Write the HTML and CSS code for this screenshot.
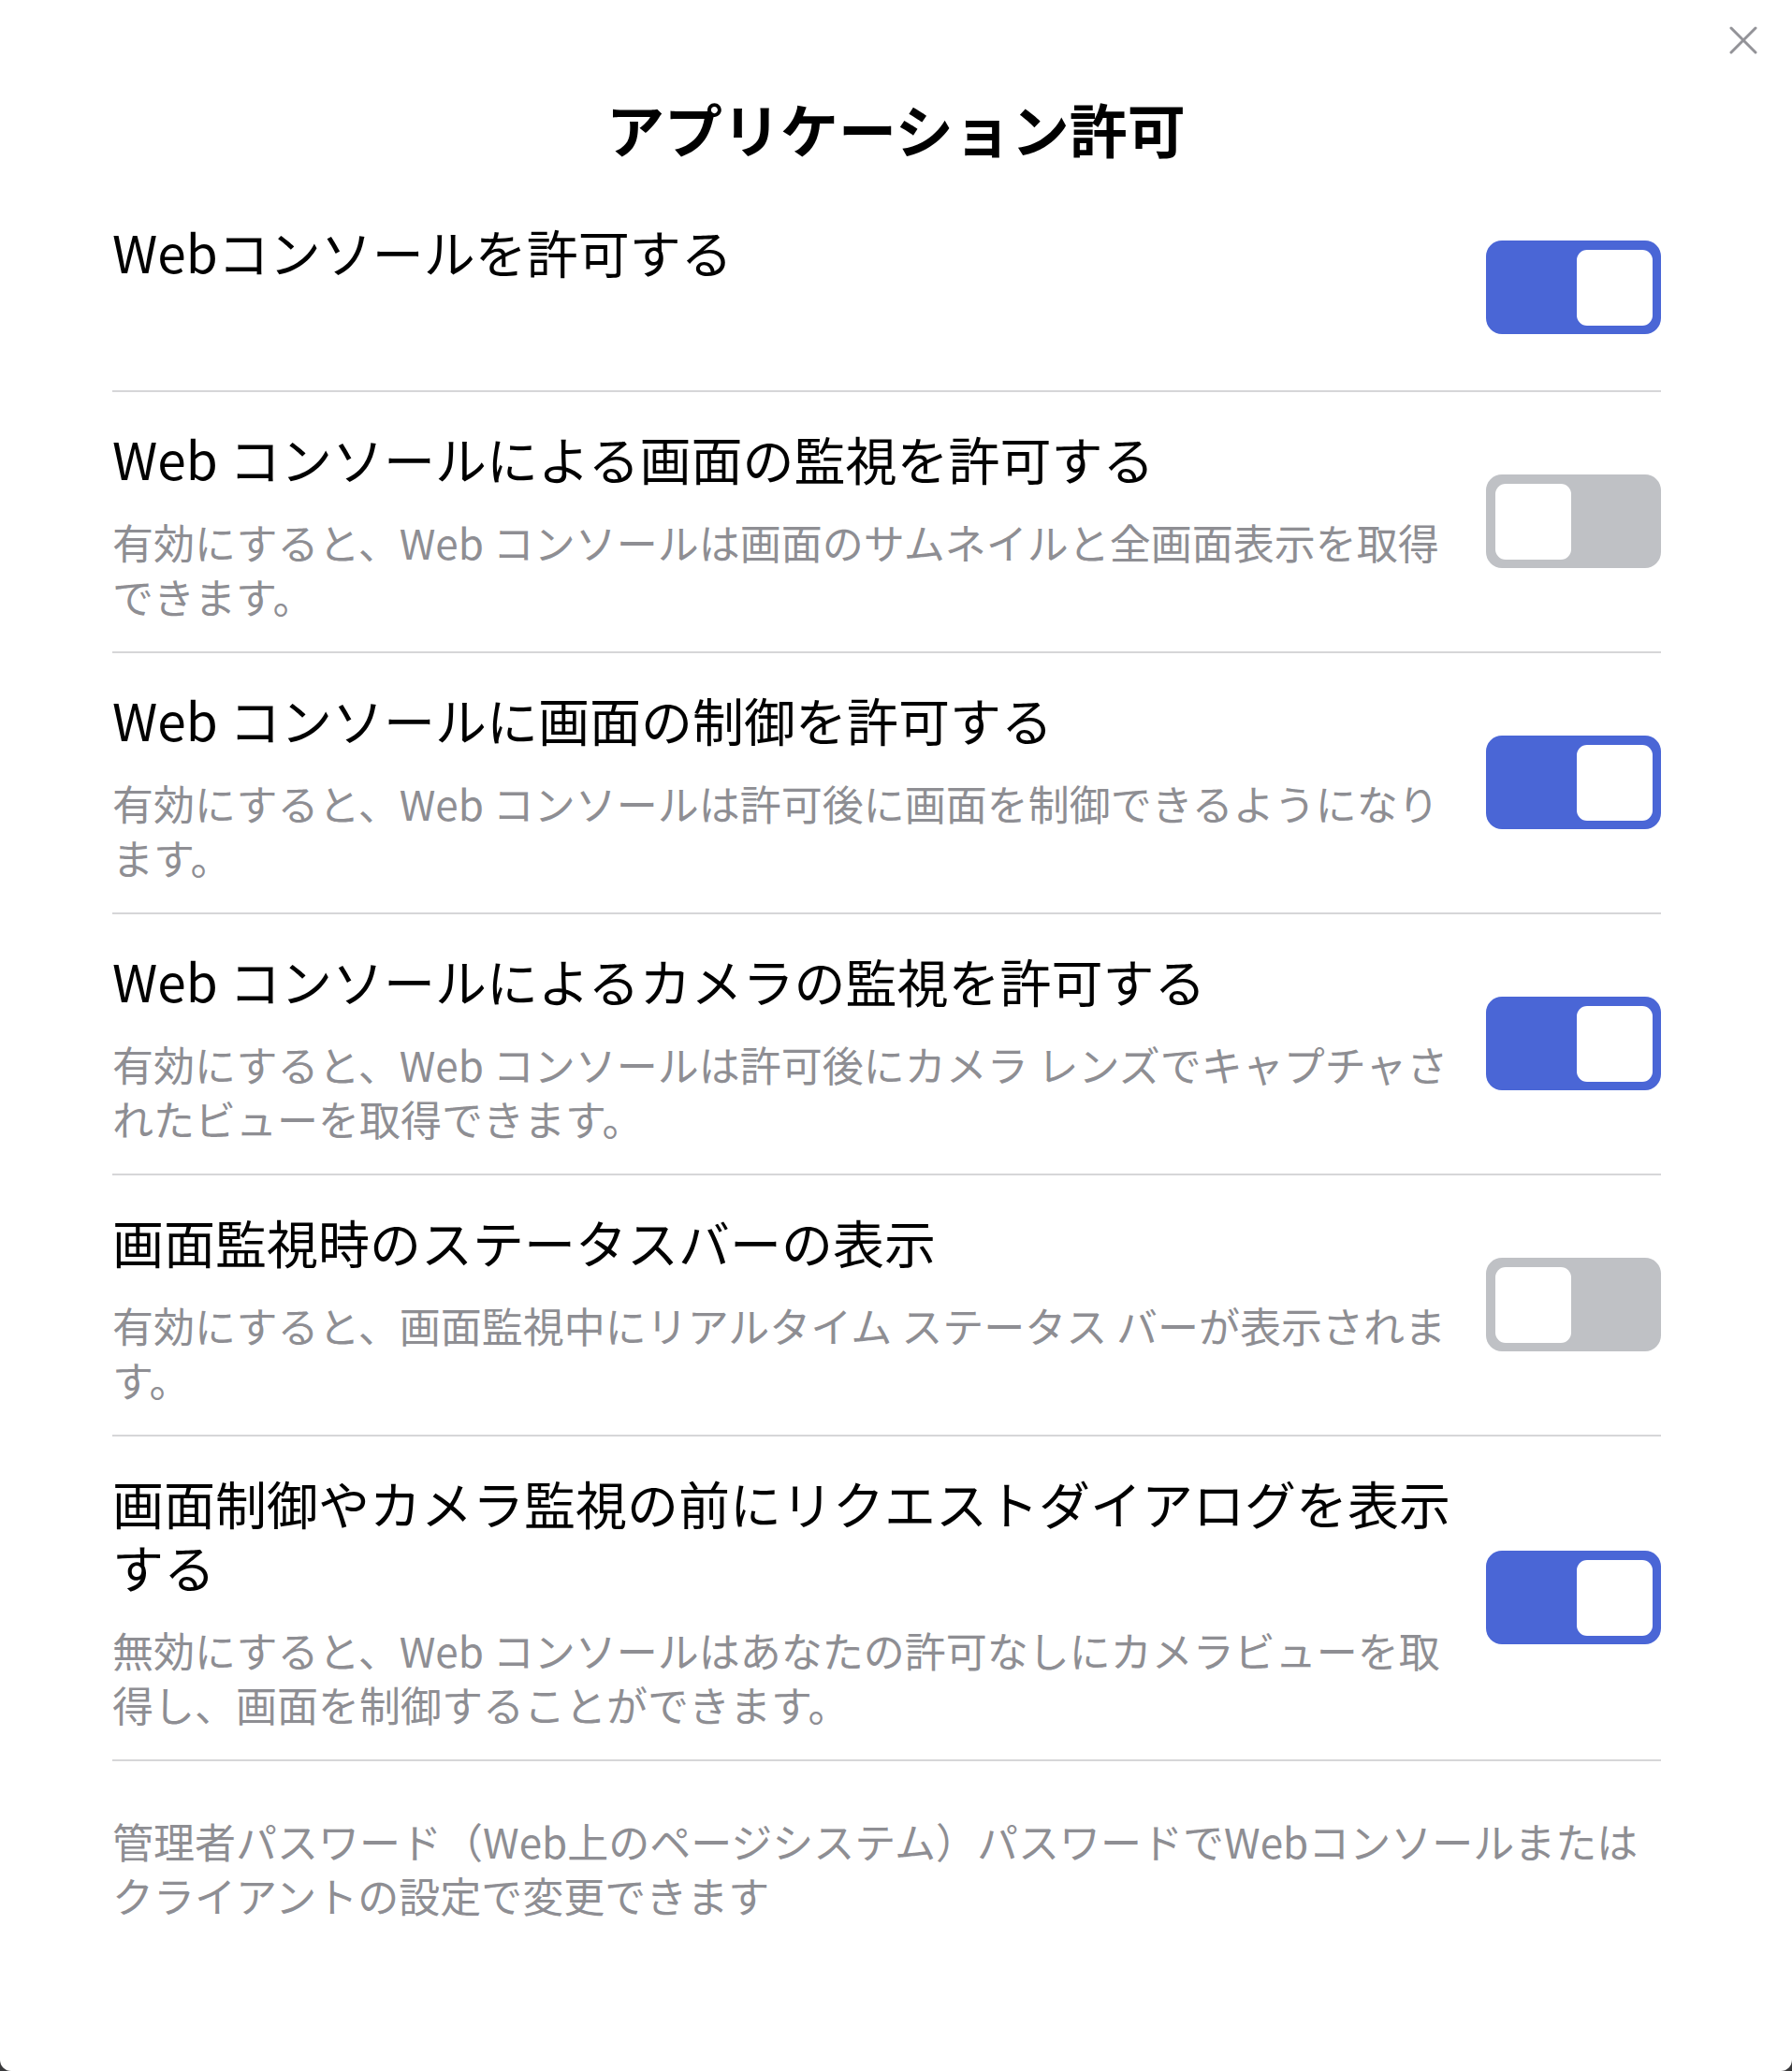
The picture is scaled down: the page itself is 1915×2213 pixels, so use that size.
FILE: index.html
```html
<!DOCTYPE html>
<html lang="ja">
<head>
    <meta charset="UTF-8">
    <meta name="viewport" content="width=device-width, initial-scale=1.0">
    <title>アプリケーション許可</title>
    <link rel="stylesheet" href="styles.css">
</head>
<body>
    <div class="dialog">
        <button class="close-button" aria-label="閉じる">
            <svg width="30" height="30" viewBox="0 0 30 30" fill="none" stroke="currentColor" stroke-width="3" stroke-linecap="round">
                <line x1="2" y1="2" x2="28" y2="28" />
                <line x1="28" y1="2" x2="2" y2="28" />
            </svg>
        </button>

        <h1 class="dialog-title">アプリケーション許可</h1>

        <div class="perm-list">
            <div class="perm-row">
                <div class="perm-text">
                    <div class="perm-title">Webコンソールを許可する</div>
                    <div class="perm-desc"></div>
                </div>
                <span class="toggle on"><span class="toggle-knob"></span></span>
            </div>

            <div class="perm-row">
                <div class="perm-text">
                    <div class="perm-title">Web コンソールによる画面の監視を許可する</div>
                    <div class="perm-desc">有効にすると、Web コンソールは画面のサムネイルと全画面表示を取得<br>できます。</div>
                </div>
                <span class="toggle"><span class="toggle-knob"></span></span>
            </div>

            <div class="perm-row">
                <div class="perm-text">
                    <div class="perm-title">Web コンソールに画面の制御を許可する</div>
                    <div class="perm-desc">有効にすると、Web コンソールは許可後に画面を制御できるようになり<br>ます。</div>
                </div>
                <span class="toggle on"><span class="toggle-knob"></span></span>
            </div>

            <div class="perm-row">
                <div class="perm-text">
                    <div class="perm-title">Web コンソールによるカメラの監視を許可する</div>
                    <div class="perm-desc">有効にすると、Web コンソールは許可後にカメラ レンズでキャプチャさ<br>れたビューを取得できます。</div>
                </div>
                <span class="toggle on"><span class="toggle-knob"></span></span>
            </div>

            <div class="perm-row">
                <div class="perm-text">
                    <div class="perm-title">画面監視時のステータスバーの表示</div>
                    <div class="perm-desc">有効にすると、画面監視中にリアルタイム ステータス バーが表示されま<br>す。</div>
                </div>
                <span class="toggle"><span class="toggle-knob"></span></span>
            </div>

            <div class="perm-row">
                <div class="perm-text">
                    <div class="perm-title">画面制御やカメラ監視の前にリクエストダイアログを表示<br>する</div>
                    <div class="perm-desc">無効にすると、Web コンソールはあなたの許可なしにカメラビューを取<br>得し、画面を制御することができます。</div>
                </div>
                <span class="toggle on"><span class="toggle-knob"></span></span>
            </div>
        </div>

        <p class="dialog-note">管理者パスワード（Web上のページシステム）パスワードでWebコンソールまたは<br>クライアントの設定で変更できます</p>
    </div>
</body>
</html>
```

FILE: styles.css
```css
html {
    background-color: #3a3a3c;
}

body {
    margin: 0;
    font-family: "Noto Sans CJK JP", "Noto Sans", sans-serif;
    color: #000;
}

.dialog {
    position: relative;
    min-height: 2213px;
    box-sizing: border-box;
    padding-top: 97px;
    background-color: #ffffff;
    border-radius: 0 0 12px 12px;
}

.close-button {
    position: absolute;
    top: 28px;
    right: 37px;
    width: 30px;
    height: 30px;
    padding: 0;
    border: none;
    background: none;
    color: #939398;
    cursor: pointer;
}

.close-button svg {
    display: block;
}

.dialog-title {
    margin: 0 0 21px 0;
    font-size: 62px;
    line-height: 80px;
    font-weight: 700;
    text-align: center;
}

.perm-list {
    margin: 0 140px 0 120px;
}

.perm-row {
    display: flex;
    align-items: center;
    gap: 16px;
    padding: 36px 0 30px 0;
    border-bottom: 2px solid #d6d6d8;
}

.perm-text {
    flex: 1;
    min-width: 0;
}

.perm-title {
    font-size: 55px;
    line-height: 68px;
    font-weight: 400;
}

.perm-desc {
    margin-top: 27px;
    min-height: 58px;
    font-size: 44px;
    line-height: 58px;
    color: #8e8e93;
}

.toggle {
    position: relative;
    flex-shrink: 0;
    width: 187px;
    height: 100px;
    margin-top: -8px;
    border-radius: 17px;
    background-color: #bfc1c5;
}

.toggle.on {
    background-color: #4a66d6;
}

.toggle-knob {
    position: absolute;
    top: 10px;
    left: 10px;
    width: 81px;
    height: 81px;
    border-radius: 11px;
    background-color: #ffffff;
}

.toggle.on .toggle-knob {
    left: auto;
    right: 9px;
}

.dialog-note {
    margin: 56px 120px 0 120px;
    font-size: 44px;
    line-height: 58px;
    color: #8e8e93;
    white-space: nowrap;
}
```
